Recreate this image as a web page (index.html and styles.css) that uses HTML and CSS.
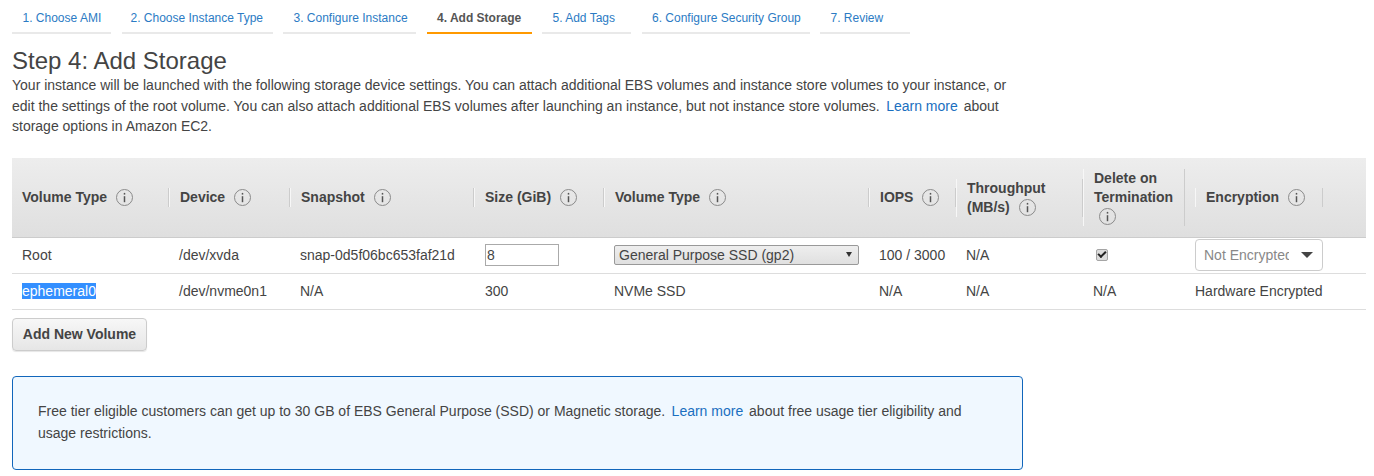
FILE: index.html
```html
<!DOCTYPE html>
<html>
<head>
    <title>Step 4: Add Storage</title>
    <link rel="stylesheet" href="styles.css">
</head>
<body>
    <ul class="wizard-tabs">
        <li class="tab"><a href="#">1. Choose AMI</a></li>
        <li class="tab"><a href="#">2. Choose Instance Type</a></li>
        <li class="tab"><a href="#">3. Configure Instance</a></li>
        <li class="tab active"><a href="#">4. Add Storage</a></li>
        <li class="tab"><a href="#">5. Add Tags</a></li>
        <li class="tab"><a href="#">6. Configure Security Group</a></li>
        <li class="tab"><a href="#">7. Review</a></li>
    </ul>

    <div class="content">
        <h1>Step 4: Add Storage</h1>
        <p class="intro">Your instance will be launched with the following storage device settings. You can attach additional EBS volumes and instance store volumes to your instance, or edit the settings of the root volume. You can also attach additional EBS volumes after launching an instance, but not instance store volumes. <a class="learn" href="#">Learn more</a> about storage options in Amazon EC2.</p>

        <table class="volumes">
            <colgroup>
                <col class="col-type">
                <col class="col-device">
                <col class="col-snapshot">
                <col class="col-size">
                <col class="col-voltype">
                <col class="col-iops">
                <col class="col-throughput">
                <col class="col-delete">
                <col class="col-encryption">
            </colgroup>
            <thead>
                <tr>
                    <th><div class="th-box">Volume Type <svg class="info" viewBox="0 0 17 17"><circle cx="8.5" cy="8.5" r="8"/><path d="M8.5 7.2v6"/><path d="M8.5 3.9v1.7"/></svg></div></th>
                    <th><div class="th-box">Device <svg class="info" viewBox="0 0 17 17"><circle cx="8.5" cy="8.5" r="8"/><path d="M8.5 7.2v6"/><path d="M8.5 3.9v1.7"/></svg></div></th>
                    <th><div class="th-box">Snapshot <svg class="info" viewBox="0 0 17 17"><circle cx="8.5" cy="8.5" r="8"/><path d="M8.5 7.2v6"/><path d="M8.5 3.9v1.7"/></svg></div></th>
                    <th><div class="th-box">Size (GiB) <svg class="info" viewBox="0 0 17 17"><circle cx="8.5" cy="8.5" r="8"/><path d="M8.5 7.2v6"/><path d="M8.5 3.9v1.7"/></svg></div></th>
                    <th><div class="th-box">Volume Type <svg class="info" viewBox="0 0 17 17"><circle cx="8.5" cy="8.5" r="8"/><path d="M8.5 7.2v6"/><path d="M8.5 3.9v1.7"/></svg></div></th>
                    <th><div class="th-box">IOPS <svg class="info" viewBox="0 0 17 17"><circle cx="8.5" cy="8.5" r="8"/><path d="M8.5 7.2v6"/><path d="M8.5 3.9v1.7"/></svg></div></th>
                    <th><div class="th-box">Throughput (MB/s) <svg class="info" viewBox="0 0 17 17"><circle cx="8.5" cy="8.5" r="8"/><path d="M8.5 7.2v6"/><path d="M8.5 3.9v1.7"/></svg></div></th>
                    <th><div class="th-box">Delete on Termination <svg class="info" viewBox="0 0 17 17"><circle cx="8.5" cy="8.5" r="8"/><path d="M8.5 7.2v6"/><path d="M8.5 3.9v1.7"/></svg></div></th>
                    <th><div class="th-box th-encryption">Encryption <svg class="info" viewBox="0 0 17 17"><circle cx="8.5" cy="8.5" r="8"/><path d="M8.5 7.2v6"/><path d="M8.5 3.9v1.7"/></svg></div></th>
                </tr>
            </thead>
            <tbody>
                <tr>
                    <td>Root</td>
                    <td>/dev/xvda</td>
                    <td>snap-0d5f06bc653faf21d</td>
                    <td class="cell-wide"><input class="size-input" type="text" value="8"></td>
                    <td>
                        <div class="type-select-wrap">
                            <select class="type-select">
                                <option>General Purpose SSD (gp2)</option>
                            </select>
                        </div>
                    </td>
                    <td>100 / 3000</td>
                    <td>N/A</td>
                    <td><input class="delete-check" type="checkbox" checked></td>
                    <td>
                        <div class="enc-select">
                            <span class="enc-value">Not Encrypted</span>
                            <span class="enc-arrow"></span>
                        </div>
                    </td>
                </tr>
                <tr>
                    <td><span class="selected-text">ephemeral0</span></td>
                    <td>/dev/nvme0n1</td>
                    <td>N/A</td>
                    <td class="cell-wide">300</td>
                    <td>NVMe SSD</td>
                    <td>N/A</td>
                    <td>N/A</td>
                    <td>N/A</td>
                    <td>Hardware Encrypted</td>
                </tr>
            </tbody>
        </table>

        <button class="add-volume" type="button">Add New Volume</button>

        <div class="notice">
            Free tier eligible customers can get up to 30 GB of EBS General Purpose (SSD) or Magnetic storage. <a class="learn" href="#">Learn more</a> about free usage tier eligibility and usage restrictions.
        </div>
    </div>
</body>
</html>
```

FILE: styles.css
```css
body {
    font-family: "Liberation Sans", Arial, sans-serif;
    font-size: 14px;
    color: #444;
    background-color: #fff;
    margin: 0;
    padding: 0;
}

a {
    color: #1a6fc0;
    text-decoration: none;
}

.wizard-tabs {
    list-style: none;
    display: flex;
    gap: 10.5px;
    margin: 0;
    padding: 0 12px;
}

.tab {
    box-sizing: border-box;
    flex: none;
    height: 34px;
    padding-left: 10.5px;
    line-height: 36px;
    font-size: 12px;
    white-space: nowrap;
    border-bottom: 2px solid #e9e9e9;
}

.tab:nth-child(1) { width: 99px; }
.tab:nth-child(2) { width: 151px; padding-left: 9px; }
.tab:nth-child(3) { width: 133px; }
.tab:nth-child(4) { width: 105px; }
.tab:nth-child(5) { width: 89px; }
.tab:nth-child(6) { width: 168px; }
.tab:nth-child(7) { width: 90px; }

.tab a {
    color: #2b7bc4;
}

.tab.active {
    border-bottom-color: #f90;
    font-weight: bold;
}

.tab.active a {
    color: #555;
}

.content {
    padding: 0 8px 0 12px;
}

h1 {
    font-size: 24px;
    font-weight: normal;
    line-height: 28px;
    margin: 13px 0 0;
    color: #444;
}

.intro {
    width: 1011px;
    line-height: 20.7px;
    margin: 0 0 21px;
}

.learn {
    margin: 0 2px 0 2.5px;
}

.volumes {
    width: 1354px;
    table-layout: fixed;
    border-collapse: separate;
    border-spacing: 0;
}

.col-type { width: 157px; }
.col-device { width: 121px; }
.col-snapshot { width: 184px; }
.col-size { width: 130px; }
.col-voltype { width: 265px; }
.col-iops { width: 87px; }
.col-throughput { width: 127px; }
.col-delete { width: 102px; }
.col-encryption { width: 181px; }

.volumes th {
    box-sizing: border-box;
    height: 80px;
    padding: 0;
    text-align: left;
    vertical-align: middle;
    line-height: 19px;
    background: linear-gradient(#ededed, #dfdfdf);
    border-bottom: 1px solid #ccc;
}

.th-box {
    padding-left: 10px;
    border-left: 1px solid #f7f7f7;
    border-right: 1px solid #ccc;
}

.volumes th:first-child .th-box {
    border-left: 0;
}

.th-box.th-encryption {
    box-sizing: border-box;
    width: 128px;
    margin-left: 10px;
}

.info {
    width: 17px;
    height: 17px;
    margin-left: 5px;
    vertical-align: -4px;
}

.info circle {
    fill: none;
    stroke: #8a8a8a;
    stroke-width: 1;
}

.info path {
    fill: none;
    stroke: #555;
    stroke-width: 1.5;
}

.volumes td {
    box-sizing: border-box;
    height: 36px;
    padding: 0 10px 2px;
    white-space: nowrap;
    border-bottom: 1px solid #ddd;
}

.volumes td.cell-wide {
    padding-left: 11px;
}

.selected-text {
    color: #fff;
    background-color: #338fff;
}

.size-input {
    box-sizing: border-box;
    display: block;
    width: 74px;
    height: 22px;
    margin: 0;
    padding: 0 1px;
    border: 1px solid #aaa;
    font-family: inherit;
    font-size: 14px;
    color: #444;
}

.type-select-wrap {
    position: relative;
    width: 245px;
}

.type-select-wrap::after {
    content: "";
    position: absolute;
    top: 7px;
    right: 7px;
    border-left: 3px solid transparent;
    border-right: 3px solid transparent;
    border-top: 5px solid #333;
}

.type-select {
    appearance: none;
    display: block;
    box-sizing: border-box;
    width: 245px;
    height: 20px;
    margin: 0;
    padding: 0 0 0 4px;
    font-family: inherit;
    font-size: 14px;
    color: #444;
    background: linear-gradient(#eeeeee, #e0e0e0);
    border: 1px solid #999;
    border-radius: 2px;
}

.delete-check {
    appearance: none;
    box-sizing: border-box;
    display: block;
    width: 12px;
    height: 12px;
    margin: 0 0 0 3px;
    background-color: #dcdcdc;
    border: 1px solid #a5a5a5;
    border-radius: 2px;
}

.delete-check::after {
    content: "";
    display: block;
    box-sizing: border-box;
    width: 8px;
    height: 5px;
    margin: 1px 0 0 1px;
    border-left: 2px solid #222;
    border-bottom: 2px solid #222;
    transform: rotate(-45deg);
}

.enc-select {
    box-sizing: border-box;
    display: flex;
    align-items: center;
    width: 128px;
    height: 32px;
    padding: 0 9px 0 8px;
    border: 1px solid #ccc;
    border-radius: 4px;
    background-color: #fff;
}

.enc-value {
    width: 85px;
    overflow: hidden;
    white-space: nowrap;
    color: #888;
}

.enc-arrow {
    width: 0;
    height: 0;
    margin-left: auto;
    border-left: 6px solid transparent;
    border-right: 6px solid transparent;
    border-top: 6px solid #444;
}

.add-volume {
    display: block;
    width: 135px;
    height: 33px;
    margin: 8px 0 25px;
    padding: 0 0 2px;
    font-family: inherit;
    font-size: 14px;
    font-weight: bold;
    color: #444;
    background: linear-gradient(#f7f7f7, #e6e6e6);
    border: 1px solid #ccc;
    border-radius: 4px;
    box-shadow: 0 1px 1px rgba(0, 0, 0, 0.1);
}

.notice {
    box-sizing: border-box;
    width: 1011px;
    height: 94px;
    padding: 24px 25px;
    line-height: 21.5px;
    background-color: #f0f8ff;
    border: 1px solid #1166bb;
    border-radius: 4px;
}
```
